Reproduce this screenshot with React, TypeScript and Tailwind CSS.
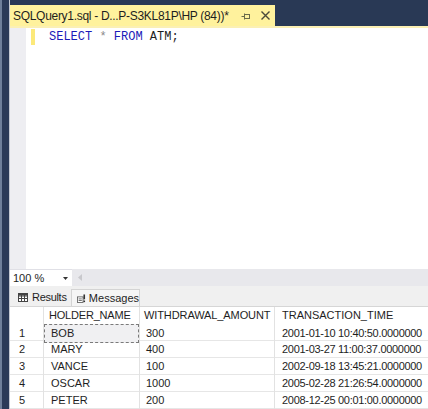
import React from "react";

const rows = [
  ["1", "BOB", "300", "2001-01-10 10:40:50.0000000"],
  ["2", "MARY", "400", "2001-03-27 11:00:37.0000000"],
  ["3", "VANCE", "100", "2002-09-18 13:45:21.0000000"],
  ["4", "OSCAR", "1000", "2005-02-28 21:26:54.0000000"],
  ["5", "PETER", "200", "2008-12-25 00:01:00.0000000"],
];

function PinIcon() {
  return (
    <svg width="9" height="7" viewBox="0 0 9 7" className="block">
      <path d="M0.5 3.5H3" stroke="#6b6b4a" strokeWidth="1" />
      <path d="M3.5 0.5V6.5" stroke="#6b6b4a" strokeWidth="1" />
      <rect x="3.5" y="1.5" width="5" height="4" fill="none" stroke="#6b6b4a" strokeWidth="1" />
    </svg>
  );
}

function CloseIcon() {
  return (
    <svg width="9" height="9" viewBox="0 0 9 9" className="block">
      <path d="M0.5 0.5L8.5 8.5M8.5 0.5L0.5 8.5" stroke="#4a4a3a" strokeWidth="1.4" />
    </svg>
  );
}

function GridIcon() {
  return (
    <svg width="10" height="9" viewBox="0 0 10 9" className="block">
      <rect x="0.5" y="0.5" width="9" height="8" fill="#fff" stroke="#444" />
      <path d="M0.5 3H9.5M0.5 5.5H9.5M3.5 0.5V8.5M6.5 0.5V8.5" stroke="#444" strokeWidth="1" />
      <rect x="0.5" y="0.5" width="9" height="2" fill="#444" />
    </svg>
  );
}

function MsgIcon() {
  return (
    <svg width="11" height="11" viewBox="0 0 11 11" className="block">
      <rect x="0.5" y="3.5" width="7" height="7" fill="#fff" stroke="#555" />
      <path d="M2 6H6M2 8H6" stroke="#555" strokeWidth="1" />
      <rect x="8" y="0.5" width="2" height="6" fill="#333" />
      <rect x="8" y="8" width="2" height="2" fill="#333" />
    </svg>
  );
}

export default function App() {
  const font = { fontFamily: '"Liberation Sans", Arial, sans-serif' };
  return (
    <div className="w-[428px] h-[409px] flex bg-white overflow-hidden" style={font}>
      {/* left strip */}
      <div className="flex h-full shrink-0">
        <div className="w-[2px] bg-[#6f7f9a]" />
        <div className="w-[7px] bg-[#2b3a58]" />
        <div className="w-[1px] bg-[#c4c8d2]" />
      </div>

      <div className="flex-1 flex flex-col min-w-0">
        {/* title bar */}
        <div className="h-[26px] bg-[#293955] flex items-end shrink-0">
          <div className="h-[21px] w-[265px] bg-[#fff29d] flex items-center pl-[3px] text-[12px] tracking-[-0.3px] text-[#1e1e1e]">
            <span className="whitespace-nowrap">SQLQuery1.sql - D...P-S3KL81P\HP (84))*</span>
            <div className="ml-[12px] mt-[1px]">
              <PinIcon />
            </div>
            <div className="ml-[11px]">
              <CloseIcon />
            </div>
          </div>
        </div>
        <div className="h-[2px] bg-[#fbf0b4] shrink-0" />

        {/* editor */}
        <div className="flex-1 flex min-h-0">
          <div className="w-[16px] bg-[#eeeef2] shrink-0" />
          <div className="w-[5px] shrink-0" />
          <div className="w-[4px] shrink-0 flex flex-col">
            <div className="h-[16px] mt-[1px] bg-[#fce97a]" />
          </div>
          <div className="flex-1 relative">
            <div className="h-[16px] mt-[1px] pl-[14px] flex items-center text-[12px] whitespace-pre" style={{ fontFamily: '"Liberation Mono", "Courier New", monospace' }}>
              <span className="text-[#1a1ab8]">SELECT</span>
              <span> </span>
              <span className="text-[#8a8a8a]">*</span>
              <span> </span>
              <span className="text-[#1a1ab8]">FROM</span>
              <span> </span>
              <span className="text-[#1e1e1e]">ATM;</span>
            </div>
          </div>
        </div>

        {/* zoom bar */}
        <div className="h-[17px] flex shrink-0 bg-[#e8e8ec]">
          <div className="w-[62px] bg-white flex items-center pl-[3px] text-[11px] text-[#1e1e1e] border-t border-[#e0e0e6]">
            <span>100 %</span>
            <svg width="5" height="3" viewBox="0 0 5 3" className="ml-auto mr-[4px] block">
              <path d="M0 0H5L2.5 3Z" fill="#333" />
            </svg>
          </div>
          <div className="flex-1 flex items-center pl-[6px]">
            <svg width="4" height="7" viewBox="0 0 4 7" className="block">
              <path d="M4 0V7L0 3.5Z" fill="#c8c8cc" />
            </svg>
          </div>
        </div>

        {/* result tabs */}
        <div className="h-[21px] flex items-end bg-[#f0f0f0] border-b border-[#d6d6d6] shrink-0 text-[11px] text-[#1e1e1e]">
          <div className="h-[17px] w-[61px] flex items-center pl-[8px] gap-[4px] tracking-[-0.3px]">
            <GridIcon />
            <span>Results</span>
          </div>
          <div className="h-[17px] w-[69px] flex items-center pl-[5px] gap-[3px] bg-[#f5f5f5] border border-b-0 border-[#d4d4d4]">
            <MsgIcon />
            <span>Messages</span>
          </div>
        </div>

        {/* grid */}
        <div className="text-[11px] text-[#1e1e1e]">
          <div className="grid grid-cols-[34px_96px_135px_1fr] h-[17px]">
            <div className="border-r border-[#e2e2e2]" />
            <div className="border-r border-[#e2e2e2] pl-[5px] flex items-center tracking-[-0.2px]">HOLDER_NAME</div>
            <div className="border-r border-[#e2e2e2] pl-[4px] flex items-center tracking-[-0.1px]">WITHDRAWAL_AMOUNT</div>
            <div className="pl-[7px] flex items-center">TRANSACTION_TIME</div>
          </div>
          {rows.map((r, i) => (
            <div key={i} className="grid grid-cols-[34px_96px_135px_1fr] h-[17px] border-b border-[#e6e6e6]">
              <div className="border-r border-[#e2e2e2] pl-[9px] flex items-center">{r[0]}</div>
              <div className="border-r border-[#e2e2e2] flex items-center">
                {i === 0 ? (
                  <div className="w-full h-full border border-dashed border-[#7a7a7a] bg-[#f0f0f2] pl-[6px] flex items-center">{r[1]}</div>
                ) : (
                  <span className="pl-[7px]">{r[1]}</span>
                )}
              </div>
              <div className="border-r border-[#e2e2e2] pl-[6px] flex items-center">{r[2]}</div>
              <div className="pl-[7px] flex items-center whitespace-nowrap tracking-[-0.3px]">{r[3]}</div>
            </div>
          ))}
        </div>
      </div>
    </div>
  );
}
